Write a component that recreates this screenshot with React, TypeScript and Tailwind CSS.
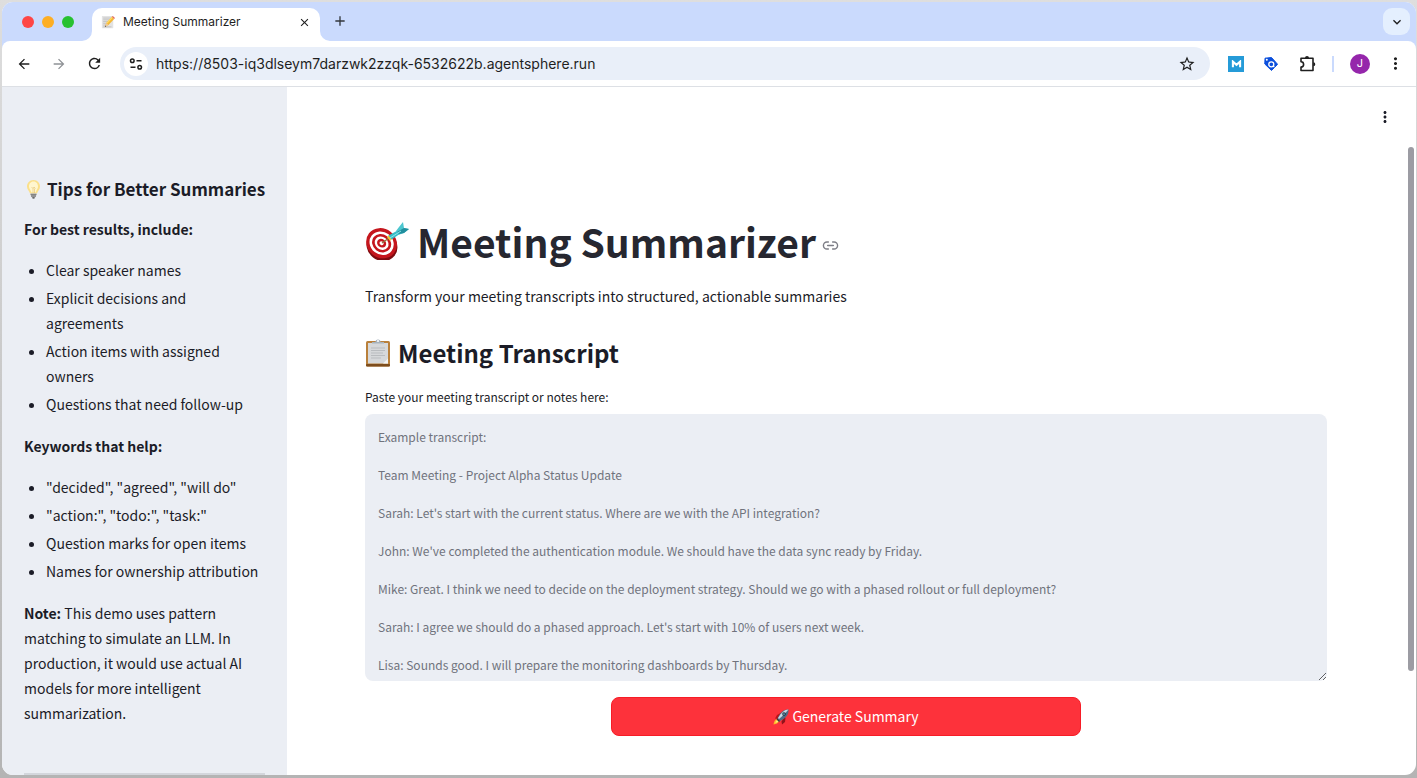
import { Link2 } from 'lucide-react';
import {
  MdAdd,
  MdArrowBack,
  MdArrowForward,
  MdClose,
  MdKeyboardArrowDown,
  MdMoreVert,
  MdRefresh,
  MdStarBorder,
} from 'react-icons/md';

const resultTips = [
  'Clear speaker names',
  'Explicit decisions and agreements',
  'Action items with assigned owners',
  'Questions that need follow-up',
];

const keywordTips = [
  '"decided", "agreed", "will do"',
  '"action:", "todo:", "task:"',
  'Question marks for open items',
  'Names for ownership attribution',
];

const examplePlaceholder = `Example transcript:

Team Meeting - Project Alpha Status Update

Sarah: Let's start with the current status. Where are we with the API integration?

John: We've completed the authentication module. We should have the data sync ready by Friday.

Mike: Great. I think we need to decide on the deployment strategy. Should we go with a phased rollout or full deployment?

Sarah: I agree we should do a phased approach. Let's start with 10% of users next week.

Lisa: Sounds good. I will prepare the monitoring dashboards by Thursday.`;

const MemoIcon = ({ className }: { className?: string }) => (
  <svg viewBox="0 0 32 32" className={className} aria-hidden="true">
    <rect x="2" y="2" width="26" height="28" rx="1" fill="#e3e3e3" />
    <path d="M5 7h19M5 11h17M5 15h13M5 19h9M5 23h7M5 27h19" stroke="#a9a9a9" strokeWidth="1.2" />
    <path d="m9 27 3-9 13-14 5 5-13 14z" fill="#f6b832" />
    <path d="m12 18 13-14 2 2-13 14z" fill="#ffdb63" />
    <path d="m9 27 3-9 5 5z" fill="#ecc9a0" />
    <path d="m9 27 1-3 2 2z" fill="#333" />
    <path d="m25 4 2-2 5 5-2 2z" fill="#e6695e" />
  </svg>
);

const BulbIcon = ({ className }: { className?: string }) => (
  <svg viewBox="0 0 32 40" className={className} aria-hidden="true">
    <path d="M16 2C8 2 3 8 3 15c0 6 4 8 6 14h14c2-6 6-8 6-14 0-7-5-13-13-13z" fill="#fbe08a" />
    <path d="M16 5c-6 0-9 5-9 10 0 4 3 7 5 12h8c2-5 5-8 5-12 0-5-3-10-9-10z" fill="#fff6cf" />
    <path d="m12 16 3 3 2-3 3 3M15 19v9M18 19v9" fill="none" stroke="#dcb45a" strokeWidth="1" />
    <path d="M10 29h12l-1 6-3 3h-4l-3-3z" fill="#a3a3a3" />
    <path d="M10 31h12M11 34h10" stroke="#6f6f6f" strokeWidth="1.2" />
    <path d="M14 37h4v2h-4z" fill="#333" />
  </svg>
);

const DartIcon = ({ className }: { className?: string }) => (
  <svg viewBox="0 0 44 38" className={className} aria-hidden="true">
    <g transform="rotate(38 16 22)">
      <ellipse cx="18" cy="23" rx="16" ry="14.5" fill="#7d0b10" />
      <ellipse cx="16" cy="21" rx="16" ry="14.5" fill="#c5161d" />
      <ellipse cx="16" cy="21" rx="12.6" ry="11.3" fill="#fff" />
      <ellipse cx="16" cy="21" rx="10" ry="8.8" fill="#c5161d" />
      <ellipse cx="16" cy="21" rx="7.3" ry="6.3" fill="#fff" />
      <ellipse cx="16" cy="21" rx="4.8" ry="4.1" fill="#c5161d" />
      <ellipse cx="16" cy="21" rx="2.2" ry="1.8" fill="#fff" />
    </g>
    <path d="m17 21 7-5" stroke="#8d7a43" strokeWidth="1.2" />
    <path d="m22 15 3 4 2-2-3-4z" fill="#f4c430" />
    <path d="m23.500 13.500 3 4 9-6-2-3.500z" fill="#37bdc6" />
    <path d="m31 9 3-4 4-5 1 6 5 1-5 4-6 2z" fill="#4cc6cf" />
    <path d="m32 10 7-4 5 1-5 4-5 1z" fill="#218f9e" />
    <path d="m25 16 11-7" stroke="#8be3e8" strokeWidth="1" />
  </svg>
);

const ClipboardIcon = ({ className }: { className?: string }) => (
  <svg viewBox="0 0 26 28" className={className} aria-hidden="true">
    <rect x="1" y="2" width="24" height="25.500" rx="1.500" fill="#b9803b" />
    <rect x="1" y="25" width="24" height="2.500" rx="1" fill="#7d4d1d" />
    <rect x="3" y="4" width="20" height="20.500" fill="#d6d8da" />
    <path d="M3 24.500h20v-5l-5 5z" fill="#f3f3f3" />
    <path d="M6 9h14M6 11.500h14M6 14h12M6 16.500h14M6 19h10" stroke="#b9bcbf" strokeWidth="1" />
    <path d="M7 4.500V3h3.500a2.500 2.500 0 0 1 5 0H19v1.500z" fill="#a7b3bd" />
    <circle cx="13" cy="2" r="1" fill="#fff" />
  </svg>
);

const RocketIcon = ({ className }: { className?: string }) => (
  <svg viewBox="0 0 32 32" className={className} aria-hidden="true">
    <path d="M8 12 15 8l3 6-8 6-6-1z" fill="#b5161c" />
    <path d="m19 22 4-6 2 2-1 8-6 5-1-6z" fill="#93131a" />
    <path d="M8 20c-5 2-6 5-7 11 6-1 9-2 11-7z" fill="#ffb52b" />
    <path d="M9 22c-3 1-4 3-4 6 3-1 5-2 6-4z" fill="#fff07a" />
    <path d="M31 1c-9-1-16 5-22 18l5 5C26 18 32 11 31 1z" fill="#4f6c86" />
    <path d="M31 1c-8 0-14 6-21 17l2 2C20 13 26 7 31 1z" fill="#c9d9e4" />
    <circle cx="22" cy="10" r="3.500" fill="#1c2833" />
    <circle cx="22" cy="10" r="1.700" fill="#6fb6dd" />
    <path d="m9 19 5 5-2 2-5-5z" fill="#2f3c48" />
  </svg>
);

const SiteSettingsIcon = ({ className }: { className?: string }) => (
  <svg viewBox="0 0 14 14" className={className} fill="none" stroke="#1f1f1f" strokeWidth="1.500" aria-hidden="true">
    <circle cx="3.300" cy="3.700" r="1.800" />
    <path d="M7.500 3.700h5M1.500 10.300h5" />
    <circle cx="10.700" cy="10.300" r="1.800" />
  </svg>
);

const TagIcon = ({ className }: { className?: string }) => (
  <svg viewBox="0 0 14 14" className={className} aria-hidden="true">
    <path d="M1 1.200 7.500.5 13.600 7.300 7.500 13.500.8 7z" fill="#0b4fdc" stroke="#0b4fdc" strokeLinejoin="round" />
    <circle cx="7.300" cy="7.300" r="2.500" fill="none" stroke="#fff" strokeWidth="1.300" />
    <circle cx="2.800" cy="2.800" r="1" fill="#fff" />
    <path d="M9 9.200 10.500 10" stroke="#fff" strokeWidth="1.200" />
  </svg>
);

const PuzzleIcon = ({ className }: { className?: string }) => (
  <svg viewBox="0 0 18 18" className={className} aria-hidden="true">
    <path
      d="M2 3.200h12v12.300H2v-3.500a2.600 2.600 0 0 0 0-5.200z"
      fill="none"
      stroke="#1f1f1f"
      strokeWidth="1.600"
      strokeLinejoin="round"
    />
    <path d="M6 3a2 2 0 0 1 4 0zM14.300 7.300a2 2 0 0 1 0 4z" fill="#1f1f1f" />
  </svg>
);

const TabStrip = () => (
  <div className="flex h-[39px] shrink-0 items-end bg-[#cadafd] pr-[6px]">
    <div className="flex h-full w-[90px] items-center gap-2 pl-5">
      <span className="size-3 rounded-full bg-[#fe4645]" />
      <span className="size-3 rounded-full bg-[#fdae24]" />
      <span className="size-3 rounded-full bg-[#27c131]" />
    </div>
    <div className="relative flex h-[33px] w-[228px] items-center rounded-t-[10px] bg-white px-[9px] pb-[5px]">
      <svg viewBox="0 0 10 10" className="absolute bottom-0 -left-[10px] size-[10px]" aria-hidden="true">
        <path d="M10 0v10H0A10 10 0 0 0 10 0z" fill="#fff" />
      </svg>
      <svg viewBox="0 0 10 10" className="absolute -right-[10px] bottom-0 size-[10px]" aria-hidden="true">
        <path d="M0 0v10h10A10 10 0 0 1 0 0z" fill="#fff" />
      </svg>
      <MemoIcon className="size-[14px]" />
      <span className="ml-2 flex-1 text-[12px] text-[#1f1f1f]">Meeting Summarizer</span>
      <button type="button" aria-label="Close tab" className="text-[#1f1f1f]">
        <MdClose className="size-[13px]" />
      </button>
    </div>
    <button type="button" aria-label="New tab" className="mb-3 ml-3 text-[#33373d]">
      <MdAdd className="size-4" />
    </button>
    <button
      type="button"
      aria-label="Search tabs"
      className="mb-[6px] ml-auto flex size-[27px] items-center justify-center rounded-[9px] bg-[#e4effe] text-[#1f1f1f]"
    >
      <MdKeyboardArrowDown className="size-4" />
    </button>
  </div>
);

const Toolbar = () => (
  <div className="shrink-0 bg-[#cadafd]">
    <div className="flex h-[46px] items-center rounded-t-[8px] border-b border-[#dde0e5] bg-white pr-[11px] pl-[14px]">
      <div className="flex items-center gap-[19px]">
        <button type="button" aria-label="Back" className="text-[#1f1f1f]">
          <MdArrowBack className="size-4" />
        </button>
        <button type="button" aria-label="Forward" className="text-[#8f9296]">
          <MdArrowForward className="size-4" />
        </button>
        <button type="button" aria-label="Reload" className="text-[#1f1f1f]">
          <MdRefresh className="size-[17px]" />
        </button>
      </div>
      <div className="ml-[17px] flex h-[33px] flex-1 items-center rounded-full bg-[#e9eff9] pr-[14px] pl-1">
        <span className="flex size-[24px] items-center justify-center rounded-full bg-white">
          <SiteSettingsIcon className="size-[14px]" />
        </span>
        <input
          type="text"
          aria-label="Address"
          defaultValue="https://8503-iq3dlseym7darzwk2zzqk-6532622b.agentsphere.run"
          className="ml-2 min-w-0 flex-1 bg-transparent text-[14px] text-[#1f1f1f] outline-none"
        />
        <button type="button" aria-label="Bookmark this page" className="text-[#1f1f1f]">
          <MdStarBorder className="size-[18px]" />
        </button>
      </div>
      <div className="ml-[18px] flex items-center">
        <button type="button" aria-label="M extension" className="flex size-4 items-center justify-center bg-[#259bd8]">
          <svg viewBox="0 0 12 10" className="h-2 w-[11px]" aria-hidden="true">
            <path d="M1.500 9V2L6 6l4.500-4v7" fill="none" stroke="#fff" strokeWidth="2.600" />
          </svg>
        </button>
        <button type="button" aria-label="Tag extension" className="ml-5">
          <TagIcon className="size-[14px]" />
        </button>
        <button type="button" aria-label="Extensions" className="ml-[21px]">
          <PuzzleIcon className="size-[18px]" />
        </button>
        <span className="ml-[15px] h-4 w-[2px] bg-[#cadafd]" />
        <button
          type="button"
          aria-label="Profile"
          className="ml-4 size-5 rounded-full bg-[#9526ab] text-[11px] text-white"
        >
          J
        </button>
        <button type="button" aria-label="Browser menu" className="ml-4 text-[#1f1f1f]">
          <MdMoreVert className="size-[19px]" />
        </button>
      </div>
    </div>
  </div>
);

const TipList = ({ items }: { items: string[] }) => (
  <ul className="mt-4 mb-[17px] list-disc space-y-[3px] pl-[22px]">
    {items.map((item) => (
      <li key={item}>{item}</li>
    ))}
  </ul>
);

const Sidebar = () => (
  <aside className="w-[285px] shrink-0 overflow-hidden bg-[#ebeef4] px-[22px] pt-[90px] text-[14px] leading-[25px]">
    <h3 className="mb-4 flex items-center text-[17px] leading-[24px] font-semibold whitespace-nowrap">
      <BulbIcon className="mr-[4px] h-5 w-[19px] shrink-0" />
      Tips for Better Summaries
    </h3>
    <p className="font-semibold">For best results, include:</p>
    <TipList items={resultTips} />
    <p className="font-semibold">Keywords that help:</p>
    <TipList items={keywordTips} />
    <p>
      <strong className="font-semibold">Note:</strong> This demo uses pattern matching to simulate an LLM. In
      production, it would use actual AI models for more intelligent summarization.
    </p>
    <hr className="mt-[47px] border-t-2 border-[#d3d6dc]" />
  </aside>
);

const SummarizerForm = () => (
  <div className="min-w-0 flex-1 pt-[66px] pr-[81px] pl-[78px]">
    <h1 className="flex items-center text-[39px] leading-[56px] font-bold text-[#262730]">
      <DartIcon className="mr-2 h-[38px] w-[44px]" />
      Meeting Summarizer
      <a href="#meeting-summarizer" aria-label="Link to heading" className="mt-2 ml-[6px] text-[#7d7e86]">
        <Link2 className="size-[17px]" />
      </a>
    </h1>
    <p className="mt-[15px] text-[14px] leading-[25px]">
      Transform your meeting transcripts into structured, actionable summaries
    </p>
    <h2 className="mt-6 flex items-center text-[24px] leading-[40px] font-semibold">
      <ClipboardIcon className="mr-[7px] h-7 w-[26px]" />
      Meeting Transcript
    </h2>
    <label htmlFor="transcript" className="mt-[14px] block text-[12px] leading-[20px]">
      Paste your meeting transcript or notes here:
    </label>
    <textarea
      id="transcript"
      placeholder={examplePlaceholder}
      className="mt-[7px] block h-[267px] w-full resize-y overflow-hidden rounded-[8px] bg-[#ebeef4] px-[13px] pt-[13px] text-[12px] leading-[19px] outline-none placeholder:text-[#70737d]"
    />
    <div className="mt-4 grid grid-cols-[1fr_2fr_1fr] gap-[11px]">
      <button
        type="button"
        className="col-start-2 flex h-[39px] items-center justify-center gap-[3px] rounded-[8px] border border-[#f71c26] bg-[#fd323b] text-[14px] text-white"
      >
        <RocketIcon className="size-4" />
        Generate Summary
      </button>
    </div>
  </div>
);

export default function App() {
  return (
    <div className="h-screen bg-linear-to-b from-[#dedede] to-[#b4b4b4] pt-[2px] pr-px pb-[3px] pl-[2px] font-[Inter,sans-serif]">
      <div className="flex h-full flex-col overflow-hidden rounded-[11px] bg-white">
        <TabStrip />
        <Toolbar />
        <div className="flex min-h-0 flex-1 font-['Noto_Sans_CJK_SC',sans-serif] text-[#1b1c27]">
          <Sidebar />
          <main className="flex min-w-0 flex-1 flex-col">
            <header className="flex h-[60px] shrink-0 items-center justify-end pr-[22px]">
              <button type="button" aria-label="App menu">
                <MdMoreVert className="size-[18px]" />
              </button>
            </header>
            <div className="flex min-h-0 flex-1 overflow-hidden">
              <SummarizerForm />
              <div className="w-2 shrink-0">
                <div className="h-[524px] w-[6px] rounded-full bg-[#9c9ca3]" />
              </div>
            </div>
          </main>
        </div>
      </div>
    </div>
  );
}
